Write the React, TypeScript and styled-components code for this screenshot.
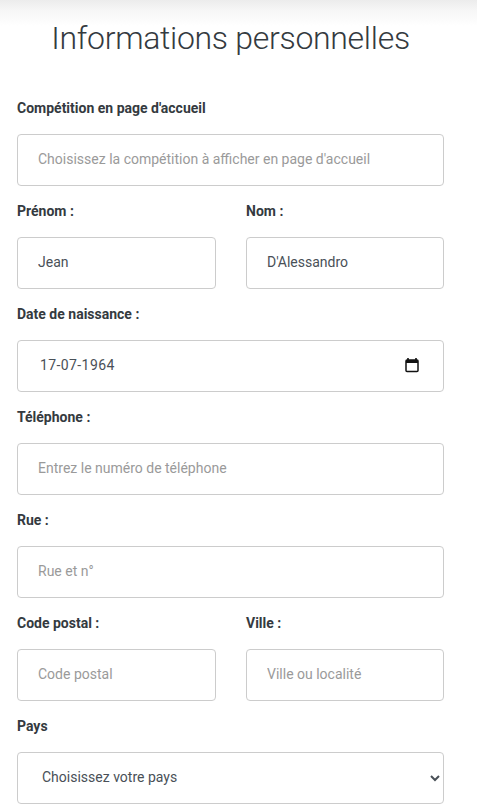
import React from "react";
import styled, { createGlobalStyle } from "styled-components";

const Global = createGlobalStyle`
  html, body { margin: 0; padding: 0; background: #fff; height: 811px; overflow: hidden; }
  body { font-family: Roboto, "Liberation Sans", sans-serif; }
  * { box-sizing: border-box; }
`;

const Page = styled.main`
  padding: 0 33px 0 17px;
  background: linear-gradient(#ececec 0, #f6f6f6 10px, #ffffff 26px) top / 100% 30px no-repeat;
`;

const Title = styled.h1`
  margin: 0;
  padding-top: 17px;
  height: 91px;
  font-size: 32px;
  line-height: 42px;
  font-weight: 300;
  letter-spacing: -0.3px;
  color: #343a40;
  text-align: center;
`;

const Field = styled.div`
  display: flex;
  flex-direction: column;
`;

const Row = styled.div`
  display: grid;
  grid-template-columns: 199px 198px;
  column-gap: 30px;
`;

const Label = styled.label`
  display: block;
  height: 35px;
  padding-top: 9px;
  margin-bottom: 8px;
  font-size: 14px;
  line-height: 17px;
  font-weight: 700;
  color: #343a40;
`;

const Control = styled.div`
  position: relative;
  height: 52px;
  margin-bottom: 8px;
`;

const Input = styled.input<{ $date?: boolean }>`
  display: block;
  width: 100%;
  height: 52px;
  padding: 0 20px 2px ${(p) => (p.$date ? "22px" : "20px")};
  border: 1px solid #cccccc;
  border-radius: 4px;
  background: #fff;
  font-family: Roboto, "Liberation Sans", sans-serif;
  font-size: 14px;
  letter-spacing: ${(p) => (p.$date ? "0.4px" : "0")};
  color: #495057;
  outline: none;
  &::placeholder { color: #9a9a9a; opacity: 1; }
`;

const DateIcon = styled.svg`
  position: absolute;
  right: 24px;
  top: 17px;
  width: 16px;
  height: 16px;
`;

const Select = styled.select`
  display: block;
  width: 100%;
  height: 52px;
  padding: 0 20px 2px;
  border: 1px solid #cccccc;
  border-radius: 4px;
  background: #fff;
  font-family: Roboto, "Liberation Sans", sans-serif;
  font-size: 14px;
  color: #495057;
  outline: none;
`;

export default function App() {
  return (
    <Page>
      <Global />
      <Title>Informations personnelles</Title>
      <Field>
        <Label>Compétition en page d'accueil</Label>
        <Control><Input placeholder="Choisissez la compétition à afficher en page d'accueil" /></Control>
      </Field>
      <Row>
        <Field>
          <Label>Prénom :</Label>
          <Control><Input defaultValue="Jean" /></Control>
        </Field>
        <Field>
          <Label>Nom :</Label>
          <Control><Input defaultValue="D'Alessandro" /></Control>
        </Field>
      </Row>
      <Field>
        <Label>Date de naissance :</Label>
        <Control>
          <Input $date defaultValue="17-07-1964" />
          <DateIcon viewBox="0 0 16 16" aria-hidden="true">
            <path d="M4 1v2M12 1v2" stroke="#111" strokeWidth="1.6" fill="none" />
            <rect x="2" y="3" width="12" height="11.5" rx="1" fill="none" stroke="#111" strokeWidth="1.5" />
            <rect x="2" y="3" width="12" height="3" fill="#111" />
          </DateIcon>
        </Control>
      </Field>
      <Field>
        <Label>Téléphone :</Label>
        <Control><Input placeholder="Entrez le numéro de téléphone" /></Control>
      </Field>
      <Field>
        <Label>Rue :</Label>
        <Control><Input placeholder="Rue et n°" /></Control>
      </Field>
      <Row>
        <Field>
          <Label>Code postal :</Label>
          <Control><Input placeholder="Code postal" /></Control>
        </Field>
        <Field>
          <Label>Ville :</Label>
          <Control><Input placeholder="Ville ou localité" /></Control>
        </Field>
      </Row>
      <Field>
        <Label>Pays</Label>
        <Control>
          <Select defaultValue="">
            <option value="">Choisissez votre pays</option>
          </Select>
        </Control>
      </Field>
    </Page>
  );
}
